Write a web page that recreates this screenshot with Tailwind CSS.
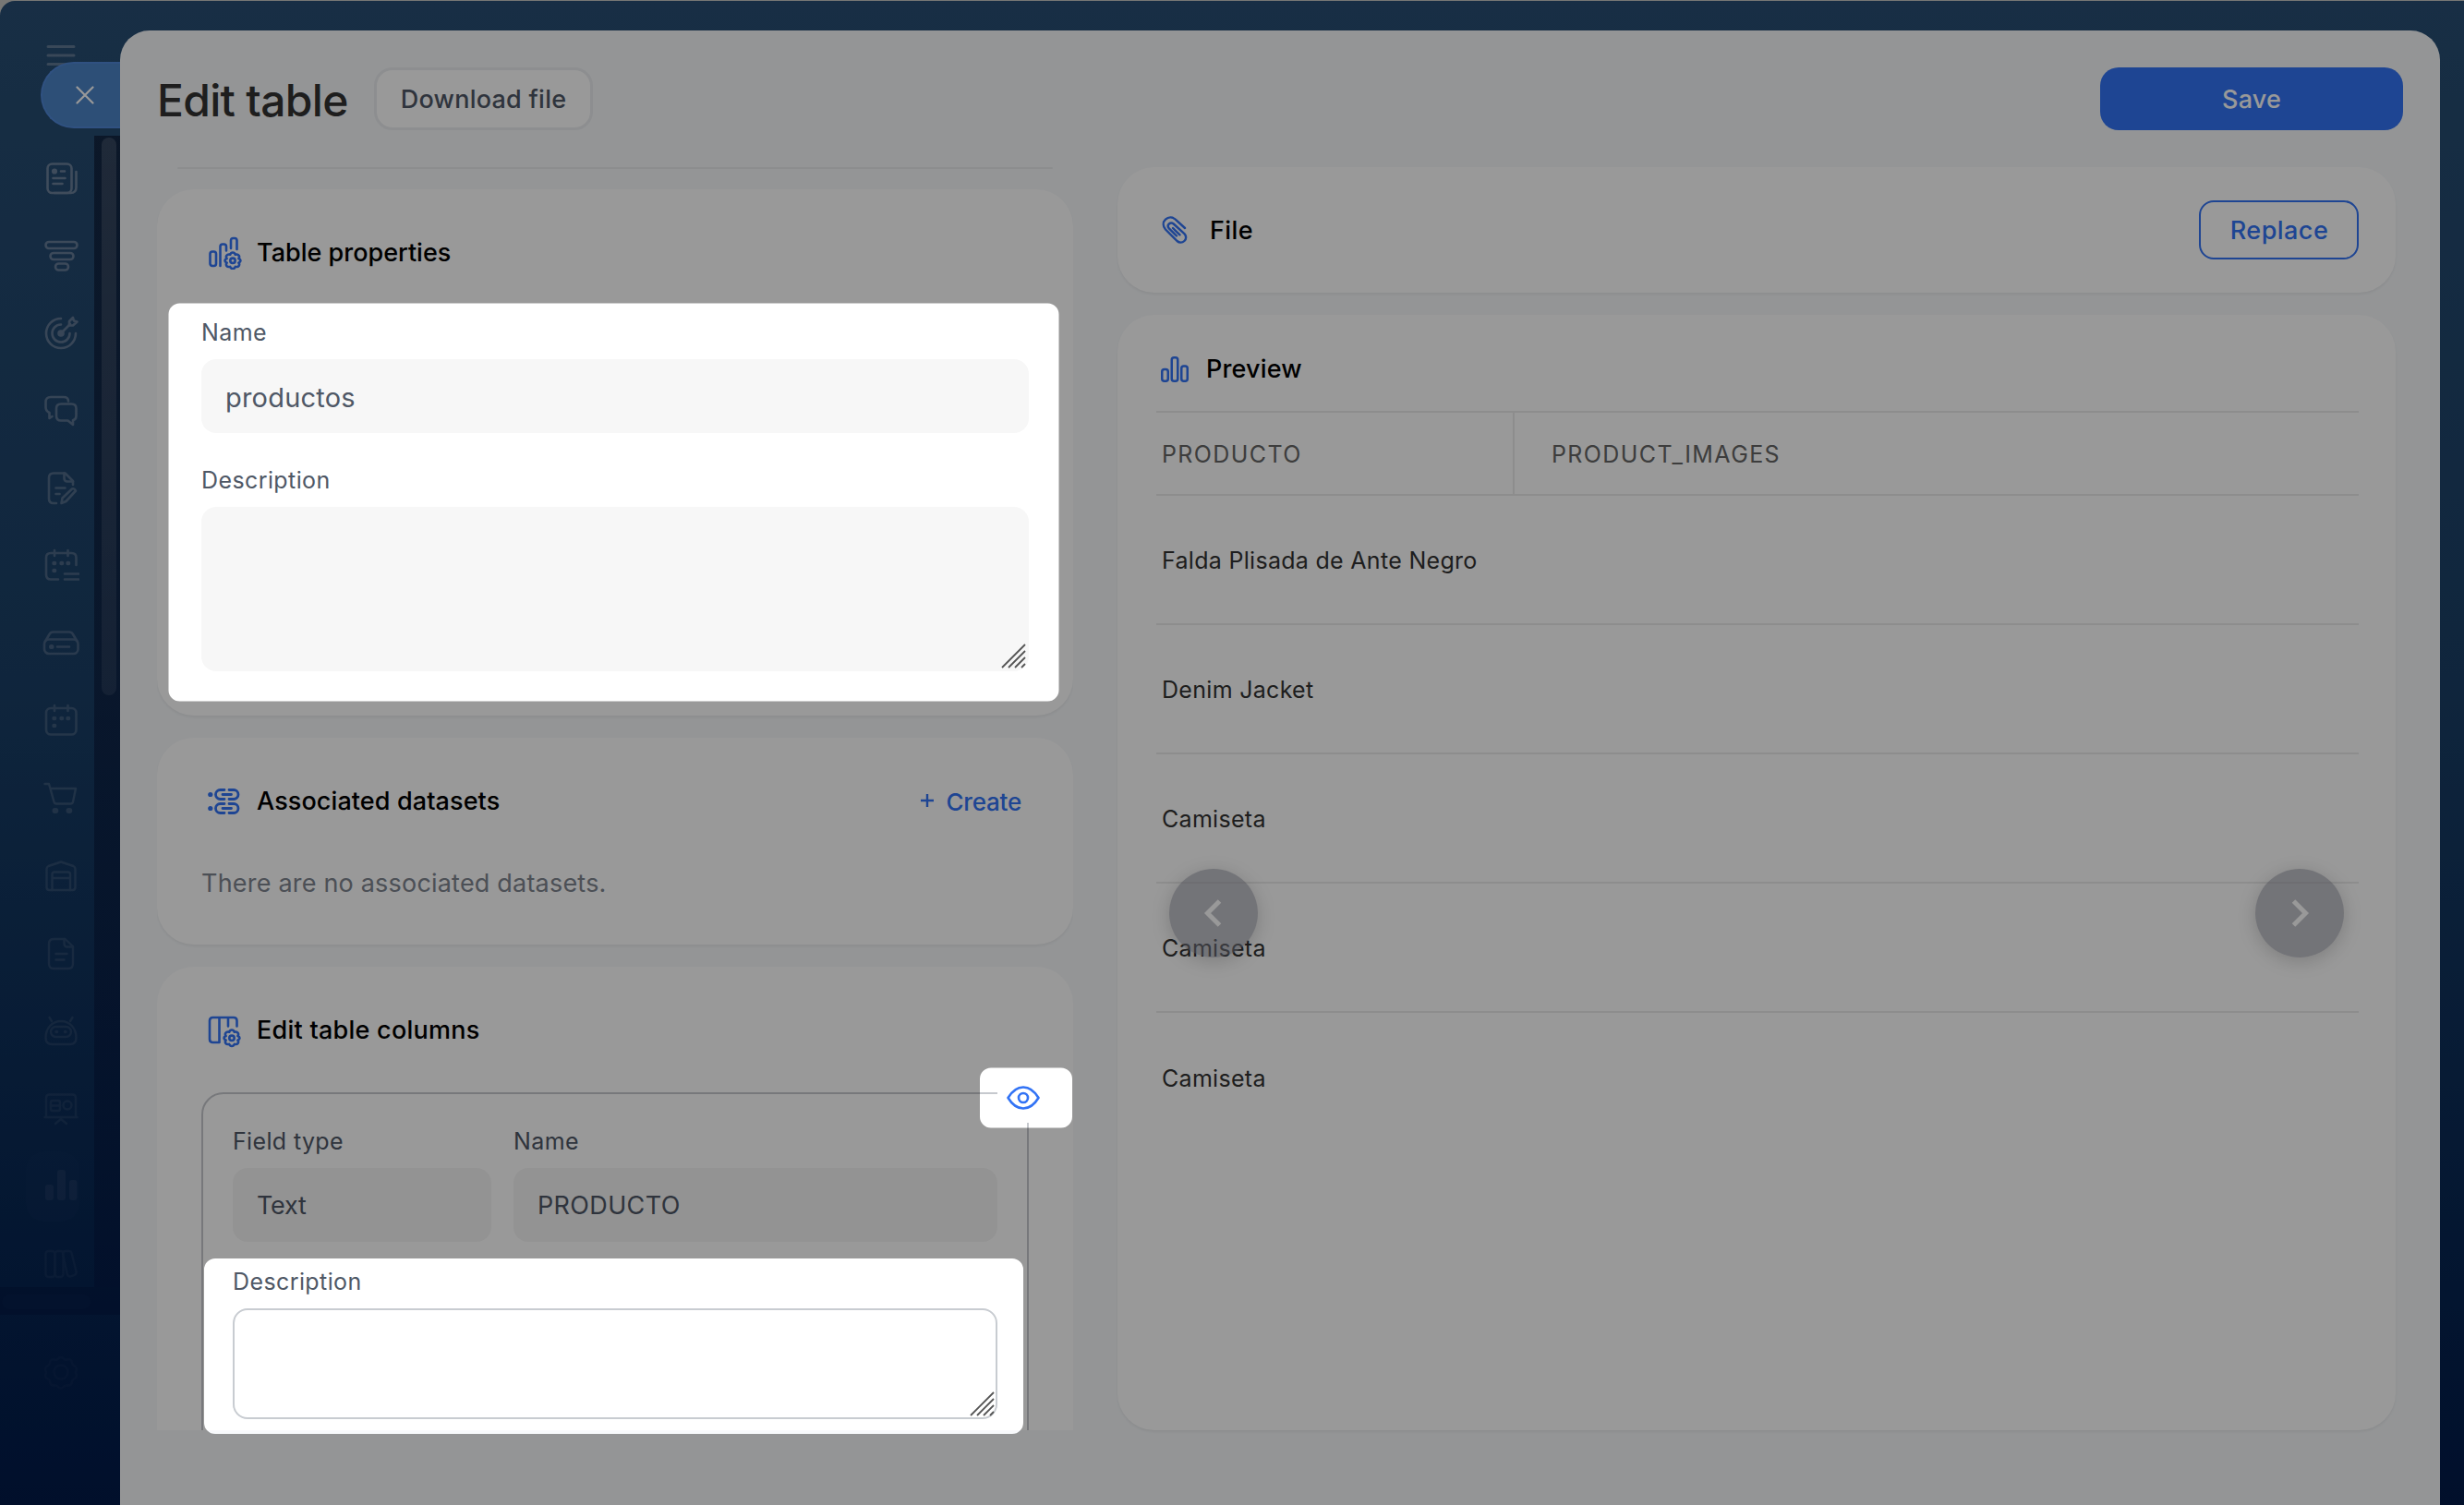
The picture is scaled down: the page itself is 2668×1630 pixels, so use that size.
<!DOCTYPE html>
<html lang="en">

<head>
	<meta charset="utf-8">
	<title>Edit table</title>
	<script src="https://cdn.jsdelivr.net/npm/@tailwindcss/browser@4"></script>
</head>

<body class="bg-[#c6c6c4]">
	<div class="relative w-[2668px] h-[1630px] overflow-hidden font-['Inter',sans-serif] pt-px">
		<div
			class="flex h-[1629px] rounded-tl-[16px] bg-linear-to-b from-[#284e73] via-[#1a3f66] via-45% to-[#021a49]">

			<!-- Sidebar -->
			<aside class="w-[130px] shrink-0 flex flex-col text-[#c8c8d2]">
				<div class="h-[146px] pt-[47px] pl-[46px]">
					<svg class="size-10 opacity-35" viewBox="0 0 40 40" fill="none" stroke="currentColor" stroke-width="3"
						stroke-linecap="round">
						<path d="M6 2.5h28M6 12h28M6 21.500h28" />
					</svg>
				</div>
				<div class="flex h-[1247px]">
					<nav class="w-[102px] shrink-0 flex flex-col pt-1 pl-[46px] h-[1247px] overflow-hidden">
						<div class="h-[84px] shrink-0 flex items-center opacity-42">
							<svg class="size-10" viewBox="0 0 40 40" fill="none" stroke="currentColor" stroke-width="2.6"
								stroke-linecap="round" stroke-linejoin="round">
								<rect x="5.500" y="4.500" width="26" height="31.500" rx="5" />
								<path d="M36.500 13v17q0 6-6 6H13M20 12.500h4M11.500 20h13M11.500 26h10" />
								<circle cx="13" cy="12.500" r="1.800" fill="currentColor" />
							</svg>
						</div>
						<div class="h-[84px] shrink-0 flex items-center opacity-40">
							<svg class="size-10" viewBox="0 0 40 40" fill="none" stroke="currentColor" stroke-width="2.6">
								<rect x="3.500" y="5" width="34" height="7" rx="3.500" />
								<rect x="8.500" y="17" width="25" height="7" rx="3.500" />
								<rect x="14" y="28.500" width="14" height="7" rx="3.500" />
							</svg>
						</div>
						<div class="h-[84px] shrink-0 flex items-center opacity-37">
							<svg class="size-10" viewBox="0 0 40 40" fill="none" stroke="currentColor" stroke-width="2.6"
								stroke-linecap="round" stroke-linejoin="round">
								<path d="M20 4A16 16 0 1 0 36 20M20 10.500A9.500 9.500 0 1 0 29.500 20M20 20L30 10" />
								<path d="M29 11V7l4-4 1 3.500 3.500 1L33 11.500h-4" />
								<circle cx="20" cy="20" r="2.500" fill="currentColor" />
							</svg>
						</div>
						<div class="h-[84px] shrink-0 flex items-center opacity-34">
							<svg class="size-10" viewBox="0 0 40 40" fill="none" stroke="currentColor" stroke-width="2.6"
								stroke-linecap="round" stroke-linejoin="round">
								<path d="M28 9.500Q28 5 23 5H9Q3.500 5 3.500 10.500V16q0 4 4 6v6l3-2" />
								<path d="M20 12.500h11.500q5 0 5 5V25q0 4.500-3.500 5v5l-5.500-4.500H20q-5 0-5-5v-8q0-5 5-5z" />
							</svg>
						</div>
						<div class="h-[84px] shrink-0 flex items-center opacity-30">
							<svg class="size-10" viewBox="0 0 40 40" fill="none" stroke="currentColor" stroke-width="2.6"
								stroke-linecap="round" stroke-linejoin="round">
								<path d="M15 36h-3q-5 0-5-5V8.500q0-5 5-5h12.500L33 12v4" />
								<path d="M23.500 3.500V9q0 3.500 3.500 3.500h6M14.500 19.500h10M14.500 26h4" />
								<path d="M20.500 36l1-5.500 10.500-10q2.500-1 4 2L25.500 34z" />
							</svg>
						</div>
						<div class="h-[84px] shrink-0 flex items-center opacity-27">
							<svg class="size-10" viewBox="0 0 40 40" fill="none" stroke="currentColor" stroke-width="2.6"
								stroke-linecap="round" stroke-linejoin="round">
								<path d="M17 34.500H9q-5 0-5-5V11q0-5 5-5h22.500q5 0 5 5v8M13 3v6M27.500 3v6M24 28.500h15M24 34.500h15" />
								<path d="M12.500 17h.6M20.500 17h.6M27.500 17h.6M12.500 25h.6" stroke-width="4.500" />
							</svg>
						</div>
						<div class="h-[84px] shrink-0 flex items-center opacity-25">
							<svg class="size-10" viewBox="0 0 40 40" fill="none" stroke="currentColor" stroke-width="2.6"
								stroke-linecap="round" stroke-linejoin="round">
								<rect x="2" y="15.500" width="36.500" height="15.500" rx="5" />
								<path d="M3 17.500L7.500 10q1.300-2.500 4-2.500h17.500q2.700 0 4 2.500l4.500 7.500M16 23.500h13" />
								<path d="M9.500 23.500h.5" stroke-width="5" />
							</svg>
						</div>
						<div class="h-[84px] shrink-0 flex items-center opacity-21">
							<svg class="size-10" viewBox="0 0 40 40" fill="none" stroke="currentColor" stroke-width="2.6"
								stroke-linecap="round" stroke-linejoin="round">
								<rect x="4" y="6" width="32.500" height="28.500" rx="5" />
								<path d="M13 3v6M27.500 3v6" />
								<path d="M12.500 17h.6M20.500 17h.6M27.500 17h.6M12.500 25h.6" stroke-width="4.500" />
							</svg>
						</div>
						<div class="h-[84px] shrink-0 flex items-center opacity-19">
							<svg class="size-10" viewBox="0 0 40 40" fill="none" stroke="currentColor" stroke-width="2.4"
								stroke-linecap="round" stroke-linejoin="round">
								<path d="M2.500 4H7l5.500 19.500q.5 2 2.500 2h15.500q2 0 2.500-2L36 9H8.500" />
								<path d="M13.500 33h.8M28.500 33h.8" stroke-width="6" />
							</svg>
						</div>
						<div class="h-[84px] shrink-0 flex items-center opacity-15">
							<svg class="size-10" viewBox="0 0 40 40" fill="none" stroke="currentColor" stroke-width="2.4"
								stroke-linecap="round" stroke-linejoin="round">
								<path d="M4.500 32V12q0-2 2-3L20 4.500 33.500 9q2 1 2 3v20q0 3-3 3h-25q-3 0-3-3z" />
								<path d="M10.500 35V18q0-2.500 2.500-2.500h14.500q2.500 0 2.500 2.500v17M10.500 22H30" />
							</svg>
						</div>
						<div class="h-[84px] shrink-0 flex items-center opacity-13">
							<svg class="size-10" viewBox="0 0 40 40" fill="none" stroke="currentColor" stroke-width="2.4"
								stroke-linecap="round" stroke-linejoin="round">
								<path d="M12 4h12.500L33 12v18.500q0 5.500-5 5.500H12q-5 0-5-5.500v-21Q7 4 12 4z" />
								<path d="M23.500 4v5q0 3.500 3.500 3.500h5.500M14.500 20h12M14.500 26.500h9" />
							</svg>
						</div>
						<div class="h-[84px] shrink-0 flex items-center opacity-11">
							<svg class="size-10" viewBox="0 0 40 40" fill="none" stroke="currentColor" stroke-width="2.4"
								stroke-linecap="round">
								<path d="M20 9C10 9 3.500 17 3.500 27q0 7 7 7h19q7 0 7-7C36.500 17 30 9 20 9zM10 9L7.500 5M30 9l2.500-4" />
								<rect x="9" y="15" width="22" height="11" rx="5.500" />
								<path d="M15 20.500h.5M24.500 20.500h.5" stroke-width="3.500" />
							</svg>
						</div>
						<div class="h-[84px] shrink-0 flex items-center opacity-9">
							<svg class="size-10" viewBox="0 0 40 40" fill="none" stroke="currentColor" stroke-width="2.4"
								stroke-linecap="round" stroke-linejoin="round">
								<path d="M4 28V8q0-3.500 3.500-3.500h25Q36 4.500 36 8v20M2.500 29h35M14 36l6-5 6 5" />
								<rect x="9" y="11" width="10" height="11" rx="2" />
								<path d="M9 16.500h10" />
								<circle cx="27" cy="16" r="4.500" />
							</svg>
						</div>
						<div class="h-[84px] shrink-0 flex items-center">
							<div class="-ml-[18px] w-[58px] h-[76px] rounded-[20px] bg-white/1 flex items-center pl-[18px]">
								<svg class="size-10 shrink-0 opacity-7" viewBox="0 0 40 40" fill="currentColor">
									<rect x="3" y="18" width="9" height="17" rx="3" />
									<rect x="16" y="2" width="9" height="33" rx="3" />
									<rect x="29" y="13" width="8.500" height="22" rx="3" />
								</svg>
							</div>
						</div>
						<div class="h-[84px] shrink-0 flex items-center opacity-6">
							<svg class="size-10" viewBox="0 0 40 40" fill="none" stroke="currentColor" stroke-width="2.4"
								stroke-linejoin="round">
								<rect x="3.500" y="6" width="10" height="28" rx="3" />
								<rect x="13.500" y="6" width="9" height="28" rx="3" />
								<path d="M22 9q0-3 3-3h4q2 0 2.500 2l5 20q.5 3-2 4l-4 1.500q-2.500.5-3.500-2z" />
							</svg>
						</div>
					</nav>
					<div class="w-7 bg-linear-to-b from-[#050a20]/55 to-[#02103c]/40 pt-0.5 pl-2">
						<div class="w-4 h-[604px] rounded-full bg-linear-to-b from-white/14 to-white/8"></div>
					</div>
				</div>
				<div class="h-[30px] shrink-0 bg-[#02103c]/35 pt-2 pl-0.5">
					<div class="w-24 h-4 rounded-full bg-white/1"></div>
				</div>
				<div class="pt-[42px] pl-[46px]">
					<svg class="size-10 opacity-3" viewBox="0 0 40 40" fill="none" stroke="currentColor" stroke-width="2.4"
						stroke-linejoin="round">
						<path
							d="M16.500 6q3.500-4 7 0 1 1.500 3.500.500 4.500-1 5 3.500 0 2 2 3 4 2 2.500 6-1 1.500 0 3 1.500 4-2.500 5.500-2 1-2 3-.5 4.500-5 4-2.500-.5-3.500 1-3.500 4-7 0-1-1.500-3.500-1-4.500.5-5-4 0-2-2-3-4-1.500-2.500-5.500 1-1.500 0-3-1.500-4 2.500-6 2-1 2-3 .5-4.500 5-3.500 2.500 1 3.500-.5z" />
						<circle cx="20" cy="20" r="7.500" />
					</svg>
				</div>
			</aside>

			<!-- Drawer -->
			<main class="relative mt-8 w-[2512px] shrink-0 rounded-t-[32px] bg-[#f7f9fb] pt-10 pl-10 pr-10">
				<button
					class="absolute left-[-86px] top-[34px] w-[86px] h-[72px] rounded-l-full border-2 border-r-0 border-[#5088d8] bg-[#4b84c6] pl-9 flex items-center">
					<svg class="size-5" viewBox="0 0 20 20" fill="none" stroke="#fff" stroke-width="2.200" stroke-linecap="round">
						<path d="M1.500 1.500l17 17M18.500 1.500l-17 17" />
					</svg>
				</button>

				<header class="flex items-center h-[68px]">
					<h1 class="w-[235px] pt-[3px] text-5xl font-medium tracking-[-0.7px] text-[#333]">Edit table</h1>
					<button
						class="w-[237px] h-[68px] rounded-[20px] border-3 border-[#ebedf0] bg-white pt-0.5 text-[27px] font-medium tracking-[0.25px] text-[#4f5866]">Download
						file</button>
					<button
						class="ml-auto w-[328px] h-[68px] rounded-[20px] bg-[#3273f5] pt-0.5 text-[27px] font-medium tracking-[0.2px] text-white">Save</button>
				</header>

				<div class="mt-10 flex gap-12 h-[1368px]">
					<!-- Left column -->
					<div class="w-[992px] shrink-0 overflow-hidden flex flex-col gap-6">
						<div class="mx-[22px] h-0.5 -mb-0.5 shrink-0 rounded-full bg-[#e9ebed]"></div>

						<section class="h-[570px] shrink-0 rounded-[40px] bg-white px-12 pt-[50px] shadow-[0_2px_3px_rgba(0,0,0,0.06)]">
							<div class="flex items-center h-[38px] pl-2">
								<svg class="size-9 mr-4" viewBox="0 0 36 36" fill="none" stroke="#3273f5" stroke-width="2.600"
									stroke-linecap="round" stroke-linejoin="round">
									<rect x="1.500" y="16.500" width="6.500" height="15.500" rx="2.500" />
									<path d="M12.500 32V11q0-2.500 2.500-2.500h1.500q2.500 0 2.500 2.500v4.500M24 13V4.500Q24 2 26.500 2H28q2.500 0 2.500 2.500V14" />
									<path
										d="M26 17.500q2 0 2.800 2.200 2.700-.6 3.800 1t-.2 3.300q2.100 1 2.100 2.300t-2.100 2.300q1.300 1.700.2 3.300t-3.800 1Q28 35 26 35t-2.800-2.100q-2.700.6-3.800-1t.2-3.300q-2.100-1-2.100-2.300t2.100-2.300q-1.300-1.700-.2-3.300t3.800-1q.8-2.200 2.800-2.200z" />
									<circle cx="26" cy="26.300" r="2.700" />
								</svg>
								<h2 class="pt-px text-[27px] font-medium">Table properties</h2>
							</div>
							<label class="block mt-[51px] h-8 leading-8 text-[25px] tracking-[0.45px] text-[#4f5866]">Name</label>
							<div
								class="mt-[13px] h-20 rounded-[16px] bg-[#f7f7f7] pl-[26px] pt-[3px] flex items-center text-[29px] tracking-[0.2px] text-[#4f5866]">
								productos</div>
							<label class="block mt-[35px] h-8 leading-8 text-[25px] tracking-[0.4px] text-[#4f5866]">Description</label>
							<div class="relative mt-[13px] h-[178px]">
								<textarea class="block w-full h-full resize-none rounded-[16px] bg-[#f7f7f7]"></textarea>
								<svg class="absolute right-[3px] bottom-[3px] size-[27px]" viewBox="0 0 27 27" stroke="#555"
									stroke-width="1.800">
									<path d="M1 26L26 1M8 26L26 8M15 26l11-11M22 26l4-4" />
								</svg>
							</div>
						</section>

						<section class="h-[224px] shrink-0 rounded-[40px] bg-white px-12 pt-[50px] shadow-[0_2px_3px_rgba(0,0,0,0.06)]">
							<div class="flex items-center h-[38px] pl-[7px] pr-2">
								<svg class="size-9 mr-[17px]" viewBox="0 0 36 36" fill="none" stroke="#3273f5" stroke-width="2.800"
									stroke-linecap="round">
									<circle cx="2.800" cy="10.500" r="2.600" fill="#3273f5" stroke="none" />
									<circle cx="2.800" cy="25.500" r="2.600" fill="#3273f5" stroke="none" />
									<path d="M18 5.500h-4.500a5 5 0 0 0 0 10H18M23 5.500h5a5 5 0 0 1 0 10h-5M16 10.500h9.500" />
									<path d="M18 20.500h-4.500a5 5 0 0 0 0 10H18M23 20.500h5a5 5 0 0 1 0 10h-5M16 25.500h9.500" />
								</svg>
								<h2 class="pt-px text-[27px] font-medium tracking-[0.1px]">Associated datasets</h2>
								<button class="ml-auto flex items-center text-[26px] font-medium tracking-[-0.2px] text-[#3273f5]">
									<svg class="size-[14px] mr-[13px] -mt-[3px]" viewBox="0 0 14 14" stroke="currentColor"
										stroke-width="2.400">
										<path d="M7 0v14M0 7h14" />
									</svg>
									Create
								</button>
							</div>
							<p class="mt-[53px] leading-[34px] text-[27px] tracking-[0.2px] text-[#7f8590]">There are no associated
								datasets.</p>
						</section>

						<section class="h-[600px] shrink-0 rounded-[40px] bg-white px-12 pt-[50px]">
							<div class="flex items-center h-[38px] pl-[7px]">
								<svg class="size-9 mr-[17px] mt-0.5" viewBox="0 0 36 36" fill="none" stroke="#3273f5" stroke-width="2.600"
									stroke-linecap="round" stroke-linejoin="round">
									<path d="M31.500 12.500V6.500q0-3.500-3.500-3.500H5.500Q2 3 2 6.500v20Q2 30 5.500 30h7V3M22 3v9.500" />
									<path
										d="M26 16.500q2 0 2.800 2.200 2.700-.6 3.800 1t-.2 3.300q2.100 1 2.100 2.300t-2.100 2.300q1.300 1.700.2 3.300t-3.800 1Q28 34 26 34t-2.800-2.100q-2.700.6-3.800-1t.2-3.300q-2.100-1-2.100-2.300t2.100-2.300q-1.300-1.700-.2-3.300t3.800-1q.8-2.200 2.800-2.200z" />
									<circle cx="26" cy="25.300" r="2.700" />
								</svg>
								<h2 class="pt-px text-[27px] font-medium tracking-[0.25px]">Edit table columns</h2>
							</div>
							<div class="relative mt-12 h-[440px] rounded-[24px] border-2 border-[#c6c9ce] px-8 pt-[35px]">
								<div class="absolute -right-0.5 -top-0.5 w-[34px] h-[33px] bg-white">
									<svg class="absolute left-[10px] -top-[7px] w-9 h-[26px]" viewBox="0 0 36 26" fill="none"
										stroke="#3273f5" stroke-width="2.600" stroke-linejoin="round">
										<path d="M1.500 13Q8.500 1.500 18 1.500T34.500 13Q27.500 24.500 18 24.500T1.500 13z" />
										<circle cx="18" cy="13" r="5" />
									</svg>
								</div>
								<div class="flex gap-6">
									<div class="w-[280px]">
										<label class="block h-8 leading-8 text-[25px] tracking-[0.35px] text-[#4f5866]">Field type</label>
										<div
											class="mt-[13px] h-20 rounded-[16px] bg-[#f6f6f6] pl-[26px] pt-[3px] flex items-center text-[27px] tracking-[-0.2px] text-[#4f5866]">
											Text</div>
									</div>
									<div class="flex-1">
										<label class="block h-8 leading-8 text-[25px] tracking-[0.45px] text-[#4f5866]">Name</label>
										<div
											class="mt-[13px] h-20 rounded-[16px] bg-[#f6f6f6] pl-[26px] pt-[3px] flex items-center text-[27px] tracking-[0.35px] text-[#4f5866]">
											PRODUCTO</div>
									</div>
								</div>
								<label class="block mt-[27px] h-8 leading-8 text-[25px] tracking-[0.4px] text-[#4f5866]">Description</label>
								<div class="relative mt-[13px] h-[120px]">
									<textarea class="block w-full h-full resize-none rounded-[16px] border-2 border-[#c8ccd1] bg-white"></textarea>
									<svg class="absolute right-[3px] bottom-[3px] size-[27px]" viewBox="0 0 27 27" stroke="#555"
										stroke-width="1.800">
										<path d="M1 26L26 1M8 26L26 8M15 26l11-11M22 26l4-4" />
									</svg>
								</div>
							</div>
						</section>
					</div>

					<!-- Right column -->
					<div class="w-[1384px] shrink-0 flex flex-col gap-6">
						<section
							class="h-[136px] rounded-[40px] bg-white pl-12 pr-10 flex items-center shadow-[0_2px_3px_rgba(0,0,0,0.06)]">
							<svg class="w-7 h-[30px] mr-6" viewBox="0 0 28 30" fill="none" stroke="#3273f5" stroke-width="2.400"
								stroke-linecap="round" stroke-linejoin="round">
								<path
									d="M25 13L15 3.800C11.500.6 7 .8 4 3.700S1 11 4 14.500L16.500 27c2.400 2.200 5.600 2.200 7.900 0s2.300-5.400 0-7.800L12.800 8.500c-1.500-1.300-3.600-1.300-5 0s-1.300 3.400 0 4.900L16 21.500M12 13L19.500 20.300" />
							</svg>
							<h2 class="pt-0.5 text-[27px] font-medium tracking-[0.4px]">File</h2>
							<button
								class="ml-auto w-[173px] h-16 rounded-[16px] border-2 border-[#3273f5] pt-0.5 pl-px text-[27px] font-medium tracking-[0.45px] text-[#3273f5]">Replace</button>
						</section>

						<section
							class="relative h-[1208px] rounded-[40px] bg-white pl-[42px] pr-10 pt-[39px] shadow-[0_2px_3px_rgba(0,0,0,0.06)]">
							<div class="flex items-center h-10 pl-[5px]">
								<svg class="w-[30px] h-7 mr-[19px]" viewBox="0 0 30 28" fill="none" stroke="#3273f5" stroke-width="2.500">
									<rect x="1.250" y="14" width="6.500" height="12.700" rx="2.500" />
									<rect x="11.750" y="1.300" width="6.500" height="25.400" rx="2.500" />
									<rect x="22.250" y="10.500" width="6.500" height="16.200" rx="2.500" />
								</svg>
								<h2 class="pt-px text-[27px] font-medium tracking-[0.15px]">Preview</h2>
							</div>
							<div class="mt-[25px] border-y-2 border-[#ebebeb] flex h-[92px] text-[25px] tracking-[1.4px] text-[#666]">
								<div class="w-[388px] shrink-0 border-r-2 border-[#ebebeb] pl-1.5 pt-[3px] flex items-center">PRODUCTO
								</div>
								<div class="pl-10 pt-[3px] flex items-center">PRODUCT_IMAGES</div>
							</div>
							<div class="text-[25px] tracking-[0.3px] text-[#333]">
								<div class="h-[140px] border-b-2 border-[#ebebeb] pl-1.5 pt-[3px] flex items-center">Falda Plisada de Ante
									Negro</div>
								<div class="h-[140px] border-b-2 border-[#ebebeb] pl-1.5 pt-[3px] flex items-center">Denim Jacket</div>
								<div class="h-[140px] border-b-2 border-[#ebebeb] pl-1.5 pt-[3px] flex items-center">Camiseta</div>
								<div class="h-[140px] border-b-2 border-[#ebebeb] pl-1.5 pt-[3px] flex items-center">Camiseta</div>
								<div class="h-[140px] pl-1.5 pt-[3px] flex items-center">Camiseta</div>
							</div>
							<button
								class="absolute left-14 top-[600px] size-24 rounded-full bg-[#888a98]/53 shadow-[0_4px_20px_rgba(0,0,0,0.18)]">
								<svg class="size-24" viewBox="0 0 96 96" fill="none" stroke="#fff" stroke-width="5">
									<path d="M54.500 35L41.500 48l13 13" />
								</svg>
							</button>
							<button
								class="absolute right-14 top-[600px] size-24 rounded-full bg-[#888a98]/53 shadow-[0_4px_20px_rgba(0,0,0,0.18)]">
								<svg class="size-24" viewBox="0 0 96 96" fill="none" stroke="#fff" stroke-width="5">
									<path d="M41.500 35l13 13-13 13" />
								</svg>
							</button>
						</section>
					</div>
				</div>
			</main>
		</div>

		<!-- Tour backdrop, open over the highlighted fields -->
		<svg class="absolute inset-0 w-[2668px] h-[1630px] pointer-events-none" viewBox="0 0 2668 1630">
			<path fill="#000" fill-opacity=".4" fill-rule="evenodd" d="M0 0H2668V1630H0Z
				M194.500 328.500H1134.500a12 12 0 0 1 12 12V747.500a12 12 0 0 1 -12 12H194.500a12 12 0 0 1 -12 -12V340.500a12 12 0 0 1 12 -12Z
				M1073 1156.500H1149a12 12 0 0 1 12 12V1209.500a12 12 0 0 1 -12 12H1073a12 12 0 0 1 -12 -12V1168.500a12 12 0 0 1 12 -12Z
				M233 1363H1096a12 12 0 0 1 12 12V1541a12 12 0 0 1 -12 12H233a12 12 0 0 1 -12 -12V1375a12 12 0 0 1 12 -12Z" />
		</svg>
	</div>
</body>

</html>
